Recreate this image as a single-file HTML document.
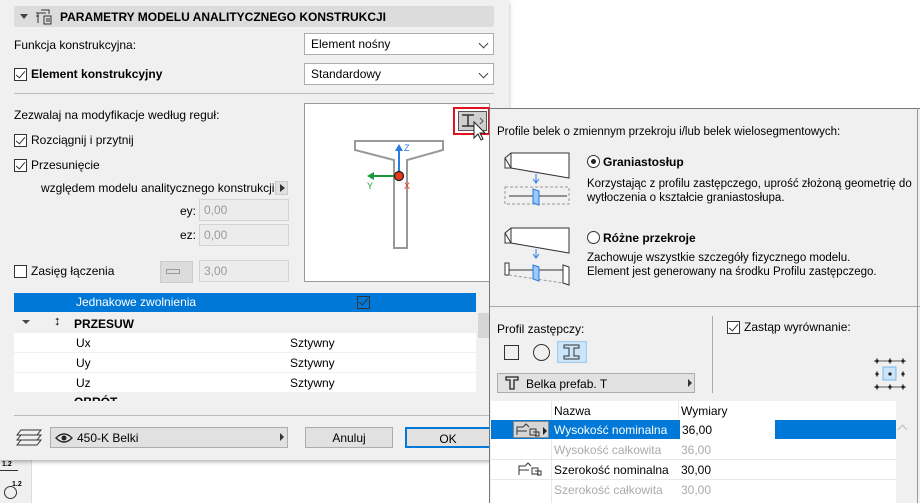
<!DOCTYPE html>
<html><head><meta charset="utf-8"><style>
*{box-sizing:border-box;margin:0;padding:0}
body{width:920px;height:503px;overflow:hidden;background:#fff;font-family:"Liberation Sans",sans-serif;font-size:12px;color:#000;position:relative}
.a{position:absolute;white-space:nowrap}
.dd{position:absolute;background:#fff;border:1px solid #adadad}
.cb{position:absolute;width:13px;height:13px;border:1px solid #333;background:#fff}
.cb.on::after{content:"";position:absolute;left:3px;top:0px;width:4px;height:8px;border:solid #333;border-width:0 1.5px 1.5px 0;transform:rotate(40deg)}
.inp{position:absolute;background:#ececec;border:1px solid #d4d4d4;color:#9a9a9a;padding:3px 0 0 4px}
.chev{position:absolute;right:6px;top:6px;width:7px;height:7px;border:solid #444;border-width:0 1px 1px 0;transform:rotate(45deg)}
.btn{position:absolute;background:#e1e1e1;border:1px solid #adadad;text-align:center}
.desc{font-size:11.5px}
</style></head><body>
<div class="a" style="left:0;top:460px;width:32px;height:43px;background:#f0f0f0;border-right:1px solid #ddd"></div>
<div class="a" style="left:2px;top:461px;font-size:7px;font-weight:bold">1.2</div>
<div class="a" style="left:0;top:470px;width:18px;border-top:1px solid #333"></div>
<div class="a" style="left:4px;top:486px;width:13px;height:13px;border:1px solid #333;border-radius:50%"></div>
<div class="a" style="left:12px;top:481px;font-size:7px;font-weight:bold">1.2</div>
<div class="a" style="left:0;top:0;width:509px;height:460px;background:#f0f0f0;box-shadow:0 2px 4px rgba(0,0,0,.3)"></div>
<div class="a" style="left:14px;top:6px;width:480px;height:21px;background:#dcdcdc;border-radius:2px"></div>
<div class="a" style="left:20px;top:14px;border:4px solid transparent;border-top:5px solid #444"></div>
<svg class="a" style="left:35px;top:9px" width="18" height="16"><path d="M1 4h10M3 4v10M1 7h3M6 1h8v4M9 7h7v8h-7zM11 10h4M11 12h4" stroke="#333" fill="none"/></svg>
<div class="a" style="left:60px;top:10px;font-weight:bold;font-size:12px">PARAMETRY MODELU ANALITYCZNEGO KONSTRUKCJI</div>
<div class="a" style="left:14px;top:38px">Funkcja konstrukcyjna:</div>
<div class="dd" style="left:304px;top:33px;width:190px;height:22px;padding:3px 6px">Element nośny<span class="chev"></span></div>
<div class="cb on" style="left:14px;top:68px"></div>
<div class="a" style="left:31px;top:67px;font-weight:bold">Element konstrukcyjny</div>
<div class="dd" style="left:304px;top:63px;width:190px;height:22px;padding:3px 6px">Standardowy<span class="chev"></span></div>
<div class="a" style="left:14px;top:93px;width:480px;border-top:1px solid #bbb"></div>
<div class="a" style="left:14px;top:108px">Zezwalaj na modyfikacje według reguł:</div>
<div class="cb on" style="left:14px;top:134px"></div><div class="a" style="left:31px;top:133px">Rozciągnij i przytnij</div>
<div class="cb on" style="left:14px;top:159px"></div><div class="a" style="left:31px;top:158px">Przesunięcie</div>
<div class="a" style="left:41px;top:181px">względem modelu analitycznego konstrukcji</div>
<div class="a" style="left:275px;top:181px;width:13px;height:14px;background:#e1e1e1;border:1px solid #ccc"></div>
<div class="a" style="left:280px;top:184px;border:4px solid transparent;border-left:5px solid #333"></div>
<div class="a" style="left:180px;top:204px">ey:</div><div class="inp" style="left:199px;top:199px;width:90px;height:22px">0,00</div>
<div class="a" style="left:180px;top:228px">ez:</div><div class="inp" style="left:199px;top:224px;width:90px;height:22px">0,00</div>
<div class="cb" style="left:14px;top:265px"></div><div class="a" style="left:31px;top:264px">Zasięg łączenia</div>
<div class="a" style="left:160px;top:261px;width:33px;height:22px;background:#dcdcdc;border:1px solid #ccc"></div>
<div class="a" style="left:166px;top:269px;width:14px;height:5px;border:1px solid #999"></div>
<div class="inp" style="left:199px;top:260px;width:90px;height:22px">3,00</div>
<div class="a" style="left:304px;top:103px;width:186px;height:179px;background:#fff;border:1px solid #999"></div>
<svg class="a" style="left:304px;top:103px" width="186" height="179">
<path d="M51 38h88v9l-36 10v88h-13v-88l-39-10z" fill="none" stroke="#999" stroke-width="2"/>
<path d="M95 72V44" stroke="#2a7ae2" stroke-width="2"/><path d="M91 48l4-7 4 7z" fill="#2a7ae2"/>
<path d="M91 73H68" stroke="#1a9a3a" stroke-width="2"/><path d="M70 69l-7 4 7 4z" fill="#1a9a3a"/>
<circle cx="95" cy="73" r="4.5" fill="#e83a1a" stroke="#222" stroke-width="1.3"/>
<text x="100" y="48" font-size="9" fill="#2a7ae2" font-family="Liberation Sans">Z</text>
<text x="63" y="86" font-size="9" fill="#1a9a3a" font-family="Liberation Sans">Y</text>
<text x="100" y="86" font-size="9" fill="#e83a1a" font-family="Liberation Sans">X</text>
</svg>
<div class="a" style="left:453px;top:107px;width:37px;height:28px;border:2px solid #e0141e"></div>
<div class="a" style="left:458px;top:111px;width:29px;height:20px;background:#cfcfcf;border:1px solid #555"></div>
<svg class="a" style="left:460px;top:112px" width="30" height="30"><path d="M2 3h12M2 14h12M8 3v11" stroke="#333" stroke-width="1.5" fill="none"/><path d="M20 6l3 3-3 3" stroke="#555" fill="none"/><path d="M14 10v16l4-4 3 6 2-1-3-6h5z" fill="#fff" stroke="#222"/></svg>
<div class="a" style="left:14px;top:293px;width:462px;height:108px;background:#f0f0f0;overflow:hidden">
 <div class="a" style="left:0;top:0;width:462px;height:19px;background:#0078d7;color:#fff;padding:2px 0 0 62px">Jednakowe zwolnienia</div>
 <div class="a" style="left:343px;top:3px;width:13px;height:13px;border:1px solid #333;background:#0078d7"></div>
 <div class="a" style="left:347px;top:3px;width:5px;height:9px;border:solid #333;border-width:0 1.5px 1.5px 0;transform:rotate(40deg)"></div>
 <div class="a" style="left:8px;top:27px;border:4px solid transparent;border-top:4px solid #444"></div>
 <div class="a" style="left:40px;top:20px;font-size:13px">↕</div>
 <div class="a" style="left:60px;top:24px;font-weight:bold">PRZESUW</div>
 <div class="a" style="left:0;top:40px;width:462px;height:19px;background:#fff;padding:3px 0 0 62px">Ux<span class="a" style="left:276px;top:3px">Sztywny</span></div>
 <div class="a" style="left:0;top:60px;width:462px;height:19px;background:#fff;padding:3px 0 0 62px">Uy<span class="a" style="left:276px;top:3px">Sztywny</span></div>
 <div class="a" style="left:0;top:80px;width:462px;height:19px;background:#fff;padding:3px 0 0 62px">Uz<span class="a" style="left:276px;top:3px">Sztywny</span></div>
 <div class="a" style="left:60px;top:102px;font-weight:bold">OBRÓT</div>
</div>
<div class="a" style="left:477px;top:293px;width:13px;height:108px;background:#f0f0f0"></div>
<div class="a" style="left:478px;top:313px;width:11px;height:25px;background:#d6d6d6"></div>
<div class="a" style="left:14px;top:415px;width:476px;border-top:1px solid #bbb"></div>
<svg class="a" style="left:16px;top:428px" width="26" height="22"><path d="M5 2h20l-4 5H1zM5 7h20l-4 5H1zM5 12h20l-4 5H1z" fill="#f0f0f0" stroke="#333"/></svg>
<div class="btn" style="left:50px;top:427px;width:238px;height:21px;text-align:left;padding:3px 0 0 26px">450-K Belki</div>
<svg class="a" style="left:55px;top:432px" width="18" height="12"><path d="M1 6Q9-2 17 6Q9 14 1 6z" fill="none" stroke="#222" stroke-width="1.3"/><circle cx="9" cy="6" r="2.5" fill="#222"/></svg>
<div class="a" style="left:280px;top:433px;border:4px solid transparent;border-left:4px solid #333"></div>
<div class="btn" style="left:305px;top:427px;width:88px;height:21px;padding-top:3px">Anuluj</div>
<div class="btn" style="left:405px;top:427px;width:86px;height:21px;padding-top:3px;border:2px solid #0078d7">OK</div>
<div class="a" style="left:489px;top:108px;width:431px;height:395px;background:#f0f0f0;border:1px solid #777;border-right:none;border-bottom:none"></div>
<div class="a desc" style="left:497px;top:126px">Profile belek o zmiennym przekroju i/lub belek wielosegmentowych:</div>
<svg class="a" style="left:503px;top:150px" width="72" height="60"><path d="M2 8l6-5h58v25L8 18zM2 8v10h6V3" fill="#fff" stroke="#333"/><path d="M33 24v8M30 29l3 4 3-4" stroke="#2a7ae2" fill="none"/><rect x="2" y="37" width="64" height="17" fill="none" stroke="#999" stroke-dasharray="3 2"/><path d="M6 46h58" stroke="#333"/><path d="M30 39l6 2v14l-6-2z" fill="#9cc8f5" stroke="#2a7ae2"/></svg>
<svg class="a" style="left:503px;top:225px" width="72" height="62"><path d="M2 8l6-5h58v25L8 18zM2 8v10h6V3" fill="#fff" stroke="#333"/><path d="M33 24v8M30 29l3 4 3-4" stroke="#2a7ae2" fill="none"/><path d="M2 38h4v12H2zM60 40l6 2v18l-6-2z" fill="#fff" stroke="#333"/><path d="M6 50l54 8" stroke="#999" stroke-dasharray="3 2"/><path d="M6 45h54" stroke="#333"/><path d="M30 40l6 2v14l-6-2z" fill="#9cc8f5" stroke="#2a7ae2"/></svg>
<div class="a" style="left:587px;top:155px;width:13px;height:13px;border:1px solid #333;border-radius:50%;background:#fff"></div>
<div class="a" style="left:591px;top:159px;width:5px;height:5px;border-radius:50%;background:#222"></div>
<div class="a" style="left:603px;top:155px;font-weight:bold">Graniastosłup</div>
<div class="a desc" style="left:587px;top:177px;line-height:14px">Korzystając z profilu zastępczego, uprość złożoną geometrię do<br>wytłoczenia o kształcie graniastosłupa.</div>
<div class="a" style="left:587px;top:231px;width:13px;height:13px;border:1px solid #333;border-radius:50%;background:#fff"></div>
<div class="a" style="left:603px;top:231px;font-weight:bold">Różne przekroje</div>
<div class="a desc" style="left:587px;top:251px;line-height:14px">Zachowuje wszystkie szczegóły fizycznego modelu.<br>Element jest generowany na środku Profilu zastępczego.</div>
<div class="a" style="left:490px;top:306px;width:430px;border-top:1px solid #aaa"></div>
<div class="a" style="left:497px;top:322px">Profil zastępczy:</div>
<div class="a" style="left:712px;top:316px;height:77px;border-left:1px solid #aaa"></div>
<div class="a" style="left:504px;top:345px;width:15px;height:15px;border:1px solid #333"></div>
<div class="a" style="left:533px;top:344px;width:17px;height:17px;border:1px solid #333;border-radius:50%"></div>
<div class="a" style="left:557px;top:341px;width:30px;height:22px;background:#cce4f7;border:1px solid #99c9ef"></div>
<svg class="a" style="left:563px;top:344px" width="18" height="16"><path d="M1 1h15v3h-5v8h5v3H1v-3h5V4H1z" fill="none" stroke="#333"/></svg>
<div class="btn" style="left:497px;top:373px;width:198px;height:20px;text-align:left;padding:3px 0 0 28px;font-size:12px">Belka prefab. T</div>
<svg class="a" style="left:505px;top:376px" width="14" height="14"><path d="M1 1h12v3H9v9H5V4H1z" fill="none" stroke="#222" stroke-width="1.3"/></svg>
<div class="a" style="left:688px;top:379px;border:4px solid transparent;border-left:4px solid #333"></div>
<div class="cb on" style="left:727px;top:321px"></div>
<div class="a" style="left:744px;top:320px">Zastąp wyrównanie:</div>
<svg class="a" style="left:873px;top:357px" width="36" height="36"><g fill="#222"><circle cx="4" cy="4" r="1.6"/><circle cx="17" cy="4" r="1.6"/><circle cx="30" cy="4" r="1.6"/><circle cx="4" cy="17" r="1.6"/><circle cx="30" cy="17" r="1.6"/><circle cx="4" cy="30" r="1.6"/><circle cx="17" cy="30" r="1.6"/><circle cx="30" cy="30" r="1.6"/></g><path d="M1 4h32M1 30h32M4 1v6M30 1v6M4 27v6M30 27v6M17 1v6M17 27v6M4 14v6M30 14v6" stroke="#222" stroke-width=".7"/><rect x="10" y="10" width="13" height="13" fill="#cce4f7" stroke="#7ab8ea"/><circle cx="17" cy="17" r="1.6" fill="#222"/></svg>
<div class="a" style="left:491px;top:401px;width:405px;height:102px;background:#fff"></div>
<div class="a" style="left:554px;top:404px">Nazwa</div><div class="a" style="left:681px;top:404px">Wymiary</div>
<div class="a" style="left:551px;top:401px;height:102px;border-left:1px solid #e8e8e8"></div>
<div class="a" style="left:678px;top:401px;height:18px;border-left:1px solid #e8e8e8"></div>
<div class="a" style="left:491px;top:420px;width:405px;height:19px;background:#0078d7"></div>
<div class="a" style="left:513px;top:421px;width:36px;height:17px;background:#d6d6d6;border:1px solid #888"></div>
<svg class="a" style="left:516px;top:423px" width="36" height="14"><path d="M1 12V4h6l3-3 3 3M1 8h10M14 6h6v6h-6zM17 9h6v4h-4" fill="none" stroke="#333"/><path d="M27 4l4 4-4 4z" fill="#222"/></svg>
<div class="a" style="left:554px;top:423px;color:#fff">Wysokość nominalna</div>
<div class="a" style="left:680px;top:420px;width:95px;height:19px;background:#fff;padding:3px 0 0 2px">36,00</div>
<div class="a" style="left:554px;top:443px;color:#aaa">Wysokość całkowita</div><div class="a" style="left:681px;top:443px;color:#aaa">36,00</div>
<div class="a" style="left:491px;top:459px;width:405px;border-top:1px solid #e8e8e8"></div>
<svg class="a" style="left:518px;top:461px" width="36" height="16"><path d="M1 14V5h6l3-3 3 3M1 9h10M14 7h6v6h-6zM17 10h6v4h-4" fill="none" stroke="#333"/></svg>
<div class="a" style="left:554px;top:463px">Szerokość nominalna</div><div class="a" style="left:681px;top:463px">30,00</div>
<div class="a" style="left:491px;top:479px;width:405px;border-top:1px solid #e8e8e8"></div>
<div class="a" style="left:554px;top:483px;color:#aaa">Szerokość całkowita</div><div class="a" style="left:681px;top:483px;color:#aaa">30,00</div>
<div class="a" style="left:899px;top:426px;width:7px;height:7px;border:solid #bbb;border-width:1px 0 0 1px;transform:rotate(45deg)"></div>
<div class="a" style="left:917px;top:108px;height:395px;border-left:1px solid #999"></div>
</body></html>
